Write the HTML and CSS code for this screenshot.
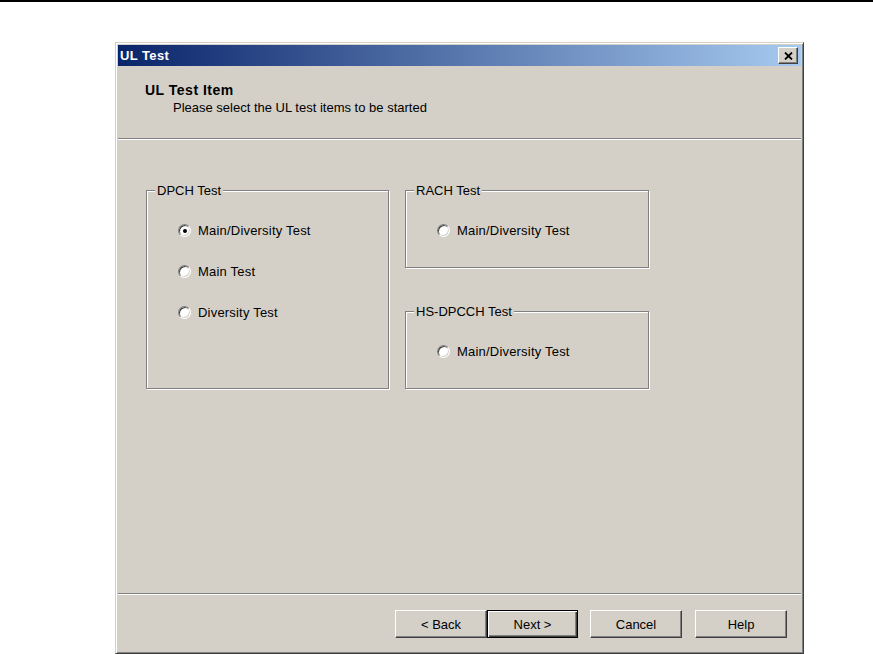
FILE: index.html
```html
<html>
    <head>
        <link rel="stylesheet" href="styles.css">
    </head>
    <body>
        <div class="dialog">
            <div class="title-bar">
                <span class="title">UL Test</span>
                <span class="close-btn">
                    <svg width="9" height="8" viewBox="0 0 9 8"><path d="M1 0.5 L8 7.5 M8 0.5 L1 7.5" stroke="#000" stroke-width="1.8"/></svg>
                </span>
            </div>
            <div class="header">
                <div class="header-title">UL Test Item</div>
                <div class="header-sub">Please select the UL test items to be started</div>
            </div>
            <div class="separator"></div>
            <div class="content">
                <div class="group dpch">
                    <span class="group-label">DPCH Test</span>
                    <div class="radio-list">
                        <label class="radio"><span class="radio-box checked"></span>Main/Diversity Test</label>
                        <label class="radio"><span class="radio-box"></span>Main Test</label>
                        <label class="radio"><span class="radio-box"></span>Diversity Test</label>
                    </div>
                </div>
                <div class="right-col">
                    <div class="group small">
                        <span class="group-label">RACH Test</span>
                        <div class="radio-list">
                            <label class="radio"><span class="radio-box"></span>Main/Diversity Test</label>
                        </div>
                    </div>
                    <div class="group small">
                        <span class="group-label">HS-DPCCH Test</span>
                        <div class="radio-list">
                            <label class="radio"><span class="radio-box"></span>Main/Diversity Test</label>
                        </div>
                    </div>
                </div>
            </div>
            <div class="separator"></div>
            <div class="footer">
                <div class="btn-pair">
                    <button class="btn">&lt; Back</button>
                    <button class="btn default">Next &gt;</button>
                </div>
                <button class="btn">Cancel</button>
                <button class="btn">Help</button>
            </div>
        </div>
    </body>
</html>
```

FILE: styles.css
```css
body {
    margin: 0;
    background: #fff;
    border-top: 2px solid #000;
    font-family: "Liberation Sans", Arial, sans-serif;
    font-size: 13px;
    color: #000;
}
.dialog {
    margin: 40px 0 0 115px;
    width: 689px;
    height: 612px;
    box-sizing: border-box;
    background: #d4d0c8;
    border: 1px solid;
    border-color: #d4d0c8 #404040 #404040 #d4d0c8;
    box-shadow: inset 1px 1px 0 #fff, inset -1px -1px 0 #808080;
    padding: 2px;
    display: flex;
    flex-direction: column;
}
.title-bar {
    height: 21px;
    background: linear-gradient(to right, #0a246a, #a6caf0);
    display: flex;
    align-items: center;
    justify-content: space-between;
    padding: 0 3px 0 2px;
}
.title {
    color: #fff;
    font-weight: bold;
    font-size: 13px;
    letter-spacing: 0.4px;
}
.close-btn {
    width: 20px;
    height: 17px;
    box-sizing: border-box;
    background: #d4d0c8;
    border: 1px solid;
    border-color: #fff #404040 #404040 #fff;
    box-shadow: inset -1px -1px 0 #808080;
    display: flex;
    align-items: center;
    justify-content: center;
}
.close-btn svg {
    display: block;
}
.header {
    height: 72px;
    box-sizing: border-box;
    padding: 16px 0 0 27px;
    line-height: 17px;
}
.header-title {
    font-weight: bold;
    font-size: 14px;
    letter-spacing: 0.5px;
}
.header-sub {
    padding-left: 28px;
}
.separator {
    height: 1px;
    background: #808080;
    border-bottom: 1px solid #fff;
}
.content {
    height: 453px;
    box-sizing: border-box;
    padding: 50px 0 0 28px;
    display: flex;
    gap: 16px;
}
.right-col {
    display: flex;
    flex-direction: column;
    gap: 43px;
}
.group {
    position: relative;
    box-sizing: border-box;
    border: 1px solid #808080;
    box-shadow: 1px 1px 0 #fff, inset 1px 1px 0 #fff;
}
.dpch {
    width: 243px;
    height: 199px;
}
.small {
    width: 244px;
    height: 78px;
}
.group-label {
    position: absolute;
    top: -9px;
    left: 8px;
    padding: 0 2px;
    background: #d4d0c8;
    line-height: 17px;
}
.radio-list {
    padding: 31px 0 0 31px;
    display: flex;
    flex-direction: column;
    gap: 24px;
}
.radio {
    display: flex;
    align-items: center;
    gap: 7px;
    height: 17px;
    letter-spacing: 0.2px;
}
.radio-box {
    width: 13px;
    height: 13px;
    box-sizing: border-box;
    border-radius: 50%;
    background: #fff;
    border: 1px solid;
    border-color: #808080 #fff #fff #808080;
    box-shadow: inset 1px 1px 0 #404040, inset -1px -1px 0 #d4d0c8;
    position: relative;
}
.radio-box.checked::after {
    content: "";
    position: absolute;
    left: 3.5px;
    top: 3.5px;
    width: 4px;
    height: 4px;
    border-radius: 50%;
    background: #000;
}
.footer {
    flex: 1;
    display: flex;
    justify-content: flex-end;
    padding: 15px 14px 0 0;
    gap: 12px;
}
.btn-pair {
    display: flex;
}
.btn {
    width: 92px;
    height: 28px;
    box-sizing: border-box;
    background: #d4d0c8;
    border: 1px solid;
    border-color: #fff #404040 #404040 #fff;
    box-shadow: inset -1px -1px 0 #808080;
    font-family: "Liberation Sans", Arial, sans-serif;
    font-size: 13px;
    color: #000;
    padding: 0;
}
.btn.default {
    width: 91px;
    border: 1px solid #000;
    box-shadow: inset 1px 1px 0 #fff, inset -1px -1px 0 #404040, inset -2px -2px 0 #808080;
}
.footer > .btn:last-child {
    margin-left: 1px;
}
```
